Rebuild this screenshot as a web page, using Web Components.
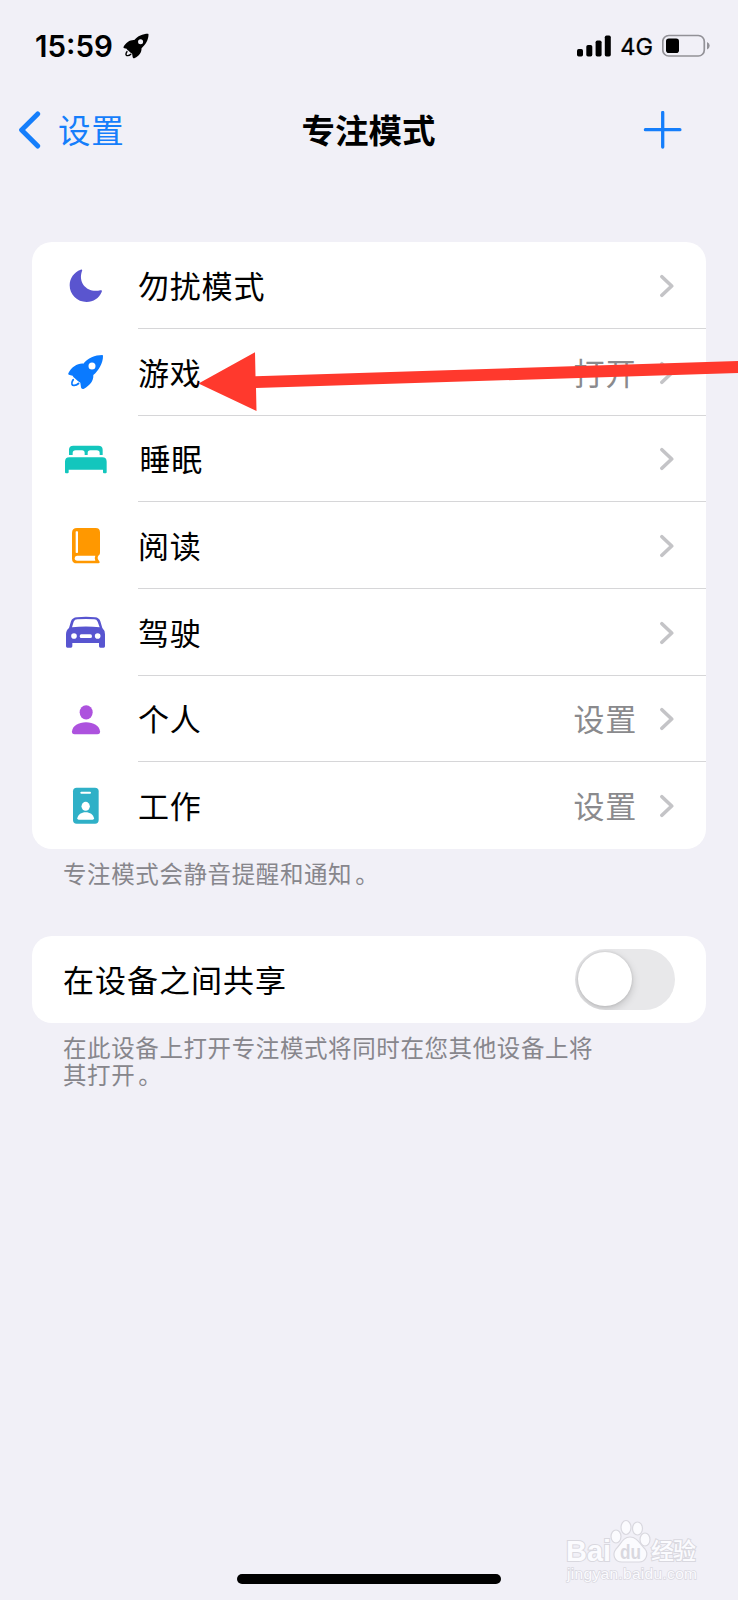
<!DOCTYPE html>
<html lang="zh-CN">
<head>
<meta charset="utf-8">
<title>专注模式</title>
<style>
html,body{margin:0;padding:0;background:#f1f0f7}
body{font-family:"Noto Sans CJK SC","Noto Sans",sans-serif;color:#000;width:738px;height:1600px;overflow:hidden}
</style>
</head>
<body>
<focus-screen></focus-screen>
<script>
const ROCKET = color => `<path fill-rule="evenodd" d="M217 360C195 360 173 370 160 386C144 384 124 396 115 415C114 418 116 420 119 420L128 422C130 426 133 428 136 431C141 436 146 440 151 443L153 457C154 462 158 463 162 461C179 452 191 438 190 420C207 406 219 384 219 363C219 361 218 360 217 360ZM186 382.500A10.500 10.500 0 1 1 186 403.500A10.500 10.500 0 1 1 186 382.500Z"/><path d="M129.500 434C125.500 440 124.500 448 128 450.500C134 452 141 450 145.500 445.500" fill="none" stroke="${color}" stroke-width="5.500" stroke-linecap="round" stroke-linejoin="round"/>`;
const ICONS = {
  moon: ['96 79 144 144', '#5a55cf', `<path d="M152 105C156 103 158 106 156 109C143 145 172 176 211 167C215 166 217 168 215 172C207 191 190 202 170 202C141 202 119 180 119 152C119 131 132 112 152 105Z"/>`],
  rocket: ['96 339 144 144', '#0a7aff', ROCKET('#0a7aff')],
  bed: ['96 59 144 144', '#13c6bd', `<path d="M117 119V103Q117 91 130 91H205Q218 91 218 103V119H209V113Q209 105 200 105H181Q173 105 173 113V119H164V113Q164 105 156 105H137Q128 105 128 113V119Z"/><path d="M105 171V139Q105 126 118 126H217Q230 126 230 139V171Q230 174 227 174H222Q219 174 219 171V163H116V171Q116 174 113 174H108Q105 174 105 171Z"/>`],
  book: ['96 319 144 144', '#ff9800', `<path fill-rule="evenodd" d="M141 340H197Q210 340 210 353V415Q210 420 205 423Q200 431 207 438Q212 444 205 446H141Q126 446 126 432V355Q126 340 141 340ZM139 350Q137 350 137 352V413Q137 415 139 415L144 414V352Q144 350 142 350ZM141 423Q134 424 134 431Q134 438 142 438H196Q192 431 196 423Z"/>`],
  car: ['96 69 144 144', '#5855d0', `<path fill-rule="evenodd" d="M141 97Q168 94 195 97Q207 98 211 109L217 129Q225 136 225 148V184Q225 188 221 188H211Q207 188 207 184V174H127V184Q127 188 123 188H112Q108 188 108 184V148Q108 136 117 129L123 109Q127 98 141 97ZM142 103Q134 103 131 110L126 127Q168 122 209 127L203 110Q200 103 193 103Q168 101 142 103ZM132 144.500A8.500 8.500 0 1 0 132 161.500A8.500 8.500 0 1 0 132 144.500ZM203 144.500A8.500 8.500 0 1 0 203 161.500A8.500 8.500 0 1 0 203 144.500ZM154 148Q149 148 149 153.500T154 159H181Q186 159 186 153.500T181 148Z"/>`],
  person: ['96 329 144 144', '#ad52de', `<ellipse cx="168.500" cy="381" rx="19.500" ry="21.500"/><path d="M126 438C128 422 145 411 168 411S208 422 210 438Q211 447 202 447H134Q125 447 126 438Z"/>`],
  badge: ['96 79 144 144', '#2fb0c7', `<rect x="129" y="99" width="77" height="108" rx="11"/><g fill="#fff"><rect x="151" y="111" width="32" height="6" rx="3"/><ellipse cx="167" cy="155" rx="12.500" ry="13.500"/><path d="M142 191C144 180 154 173 167 173S190 180 192 191Q192 195 188 195H146Q142 195 142 191Z"/></g>`]
};
function define(name, html) {
  const t = document.createElement('template');
  t.innerHTML = html;
  customElements.define(name, class extends HTMLElement {
    constructor() { super(); this.attachShadow({mode: 'open'}).append(t.content.cloneNode(true)); }
  });
}

define('status-bar', `<style>
:host{display:flex;height:92px;align-items:center;padding:0 28px 0 35px;box-sizing:border-box;font-family:Inter,sans-serif}
.t{font-size:29.500px;font-weight:600;line-height:36px;width:88px;white-space:nowrap}
.net{font-size:23.500px;line-height:30px;margin:1px 9px 0 9px;-webkit-text-stroke:.3px #000}
svg{display:block;flex:none}.sp{flex:1}
</style><span class="t">15:59</span>
<svg width="26" height="26" viewBox="113 358 108 106">${ROCKET('#000')}</svg><span class="sp"></span>
<svg width="34" height="22" viewBox="0 0 34 22"><rect y="14" width="6" height="7.500" rx="1.700"/><rect x="9.300" y="10" width="6" height="11.500" rx="1.700"/><rect x="18.600" y="5.500" width="6" height="16" rx="1.700"/><rect x="27.800" y=".5" width="6" height="21" rx="1.700"/></svg>
<span class="net">4G</span>
<svg width="48" height="24" viewBox="0 0 48 24"><rect x=".8" y="1.500" width="41.500" height="20.500" rx="6" fill="none" stroke="#929197" stroke-width="1.700"/><rect x="4" y="4.500" width="13" height="14.500" rx="2.800"/><path d="M45 8Q47.700 9 47.700 11.700T45 15.500Z" fill="#929197"/></svg>`);

define('nav-bar', `<style>
:host{display:grid;grid-template-columns:1fr auto 1fr;align-items:center;height:76px;padding:0 55px 0 18px;box-sizing:border-box}
.back{display:flex;align-items:center;gap:17px;color:#157efb;font-size:32.500px;letter-spacing:.8px;line-height:48px}
.back slot{display:block;transform:translateY(-1px)}
h1{margin:0;font-size:33.500px;line-height:48px;font-weight:700;transform:translate(18px,-1px)}
svg{display:block}.add{justify-self:end}
</style><div class="back"><svg width="23" height="38" viewBox="0 0 23 38"><path d="M19.700 2.900 3.600 19l16.100 16.100" fill="none" stroke="#157efb" stroke-width="4.900" stroke-linecap="round" stroke-linejoin="round"/></svg><slot name="back"></slot></div>
<h1><slot></slot></h1>
<svg class="add" width="40" height="38" viewBox="0 0 40 38"><path d="M2.400 18.700h34.500M19.700 1.500v34.500" stroke="#157efb" stroke-width="3.300" stroke-linecap="round"/></svg>`);

define('settings-card', `<style>
:host{display:block;margin:0 32px;background:#fff;border-radius:20px;overflow:hidden}
</style><slot></slot>`);

customElements.define('focus-icon', class extends HTMLElement {
  constructor() {
    super();
    const [box, color, shape] = ICONS[this.getAttribute('name') || 'moon'];
    this.attachShadow({mode: 'open'}).innerHTML = `<style>:host{display:block;width:48px;height:48px;flex:none}svg{display:block}</style><svg width="48" height="48" viewBox="${box}" fill="${color}">${shape}</svg>`;
  }
});

define('focus-row', `<style>
:host{display:flex;align-items:center;height:86.700px;padding-left:30px;gap:28px}
.body{flex:1;height:87px;box-sizing:border-box;display:flex;align-items:center;border-bottom:1px solid #d6d6d8;padding:0 32px 0 0;font-size:31px;letter-spacing:.8px}
:host([last]) .body{border-color:transparent}
.label{flex:1}.value{color:#8a8a8d;margin-right:23px}
:host([inset]) .label{padding-left:1.500px}
svg{display:block;margin-top:2px}
.label,.value{line-height:48px}
</style><slot name="icon"></slot><div class="body"><span class="label"><slot></slot></span><span class="value"><slot name="value"></slot></span>
<svg width="14" height="24" viewBox="0 0 14 24"><path d="M1.900 2.700 11.700 12l-9.800 9.300" fill="none" stroke="#c4c4c7" stroke-width="3.600" stroke-linecap="round" stroke-linejoin="round"/></svg></div>`);

define('foot-note', `<style>:host{display:block;margin:0 64px 0 63px;font-size:23.500px;letter-spacing:.6px;line-height:27.500px;color:#87868c;padding-top:11px;box-sizing:border-box}</style><slot></slot>`);

define('toggle-row', `<style>
:host{display:flex;align-items:center;justify-content:space-between;height:87px;padding:0 31px 0 31px;font-size:31px;letter-spacing:1px}
span{transform:translateY(-1px)}
.sw{width:100.500px;height:61px;border-radius:31px;background:#e8e8ea;box-sizing:border-box;padding:3.500px;overflow:hidden}
.k{width:54px;height:54px;border-radius:50%;background:#fff;box-shadow:0 3px 9px rgba(0,0,0,.18),0 0 3px rgba(0,0,0,.12)}
</style><span><slot></slot></span><div class="sw"><div class="k"></div></div>`);

define('pointer-arrow', `<style>:host{position:absolute;left:0;top:340px;width:738px;height:80px;pointer-events:none}svg{display:block}</style>
<svg width="738" height="80" viewBox="0 340 738 80"><path fill="#ff392d" d="M198.500 383.500 255 352.300 255.500 376.300 738 361V373L256 388 256.500 411Z"/></svg>`);

define('site-mark', `<style>
:host{position:absolute;left:565px;top:1518px;width:140px;height:68px;font-family:"Liberation Sans","Noto Sans CJK SC",sans-serif}
svg{display:block;overflow:visible}
text{fill:#fbfbfe;stroke:#d9d8df;stroke-width:2px;paint-order:stroke}
</style><svg width="140" height="68" viewBox="565 1518 140 68">
<text x="566" y="1561" font-size="29" font-weight="700" textLength="45" lengthAdjust="spacingAndGlyphs">Bai</text>
<g fill="#fbfbfe" stroke="#d9d8df" stroke-width="1.200"><ellipse cx="616" cy="1536.500" rx="5" ry="6.500"/><ellipse cx="626" cy="1527.500" rx="5" ry="7"/><ellipse cx="637.500" cy="1528.500" rx="5" ry="6.500"/><ellipse cx="645" cy="1539.500" rx="5" ry="6.500"/>
<path d="M630 1537C637 1537 640 1544 645 1549C649 1554 646 1562 639 1562H622C614 1562 612 1554 616 1549C621 1544 623 1537 630 1537Z"/></g>
<text x="620" y="1559" font-size="20" textLength="21" lengthAdjust="spacingAndGlyphs" style="fill:#d9d8df;stroke:none;font-weight:700">du</text>
<text x="651" y="1559" font-size="23" font-weight="500" textLength="45">经验</text>
<text x="567" y="1579" font-size="15.500" textLength="130" style="stroke-width:1.400px">jingyan.baidu.com</text></svg>`);

define('home-indicator', `<style>:host{display:block;width:264px;height:10px;border-radius:5px;background:#000;margin:auto auto 16px}</style>`);

define('focus-screen', `<style>
:host{position:relative;display:flex;flex-direction:column;width:738px;height:1600px;background:#f1f0f7;overflow:hidden}
.modes{margin-top:74px}
.n1{height:87px}
.stop{margin-left:3px}
</style>
<status-bar></status-bar>
<nav-bar><span slot="back">设置</span>专注模式</nav-bar>
<settings-card class="modes">
<focus-row><focus-icon slot="icon" name="moon"></focus-icon>勿扰模式</focus-row>
<focus-row><focus-icon slot="icon" name="rocket"></focus-icon>游戏<span slot="value">打开</span></focus-row>
<focus-row inset><focus-icon slot="icon" name="bed"></focus-icon>睡眠</focus-row>
<focus-row><focus-icon slot="icon" name="book"></focus-icon>阅读</focus-row>
<focus-row><focus-icon slot="icon" name="car"></focus-icon>驾驶</focus-row>
<focus-row><focus-icon slot="icon" name="person"></focus-icon>个人<span slot="value">设置</span></focus-row>
<focus-row last><focus-icon slot="icon" name="badge"></focus-icon>工作<span slot="value">设置</span></focus-row>
</settings-card>
<foot-note class="n1">专注模式会静音提醒和通知<span class="stop">。</span></foot-note>
<settings-card><toggle-row>在设备之间共享</toggle-row></settings-card>
<foot-note>在此设备上打开专注模式将同时在您其他设备上将<br>其打开<span class="stop">。</span></foot-note>
<home-indicator></home-indicator>
<pointer-arrow></pointer-arrow>
<site-mark></site-mark>`);
</script>
</body>
</html>
